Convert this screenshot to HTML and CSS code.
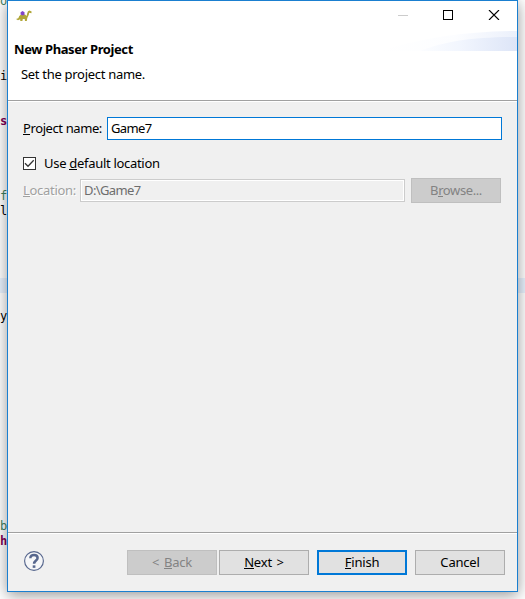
FILE: index.html
```html
<!DOCTYPE html>
<html lang="en">
<head>
<meta charset="utf-8">
<title>New Phaser Project</title>
<link rel="stylesheet" href="styles.css">
</head>
<body>
<div class="editor" aria-hidden="true">
  <div class="current-line"></div>
  <span class="code comment l1">o</span>
  <span class="code l2">i</span>
  <span class="code keyword l3">s</span>
  <span class="code comment l4">f</span>
  <span class="code l5">l</span>
  <span class="code l6">y</span>
  <span class="code comment l7">b</span>
  <span class="code keyword l8">h</span>
</div>
<main class="dialog">
  <header class="banner">
    <div class="titlebar">
      <svg class="app-icon" width="16" height="12" viewBox="0 0 16 12">
        <path d="M0 9 2.3 8.3 3.3 6 5 4.6 9 4.6 10.6 6 11.2 3.2 12 1.3 13.5.4 15.6 1.4 15.4 3.3 13.2 2.7 12.8 4.8 11.3 8 10.8 11 9 11 8.7 9 6.8 9 6.4 11 4.3 11 4.2 9.3 2 10.3Z" fill="#b0a638"/>
        <path d="M4.6 2.3 6.5 1.1 8.5 2.3 8.5 4.8 6.5 5.6 4.6 4.5Z" fill="#8245c8"/>
      </svg>
      <svg class="controls" width="102" height="10" viewBox="0 0 102 10" shape-rendering="crispEdges">
        <path d="M0 5.5H10" stroke="#ccc"/>
        <path d="M45.5.5H54.5V9.5H45.5Z" fill="none" stroke="#000"/>
        <path d="M91 0 101 10M101 0 91 10" stroke="#000" stroke-width="1.15" shape-rendering="auto"/>
      </svg>
    </div>
    <svg class="swoosh" width="137" height="20" viewBox="0 0 137 20">
      <defs>
        <linearGradient id="outer"><stop offset="0" stop-color="#fff"/><stop offset=".55" stop-color="#fcfdff"/><stop offset="1" stop-color="#ebf0fb"/></linearGradient>
        <linearGradient id="inner"><stop offset="0" stop-color="#fcfdff"/><stop offset=".4" stop-color="#f2f6fe"/><stop offset="1" stop-color="#dde5f7"/></linearGradient>
      </defs>
      <path d="M0 20C40 7 90 0 137 0V20Z" fill="url(#outer)"/>
      <path d="M40 20C65 10 95 6 137 6V20Z" fill="url(#inner)"/>
    </svg>
    <h1>New Phaser Project</h1>
    <p>Set the project name.</p>
  </header>
  <section class="content">
    <div class="row name-row">
      <label class="name-label"><u>P</u>roject name:</label>
      <div class="field">Game7</div>
    </div>
    <div class="row check-row">
      <span class="checkbox"><svg width="11" height="11" viewBox="0 0 11 11"><path d="M1 5.3 4 8.3 9.7 2.2" fill="none" stroke="#333" stroke-width="1.25"/></svg></span>
      <label class="check-label">Use <u>d</u>efault location</label>
    </div>
    <div class="row location-row">
      <label class="location-label"><u>L</u>ocation:</label>
      <div class="field disabled-field">D:\Game7</div>
      <div class="button disabled browse"><span>B<u>r</u>owse...</span></div>
    </div>
  </section>
  <footer class="footer">
    <svg class="help" width="20" height="20" viewBox="0 0 20 20" fill="none" stroke="#56668d">
      <circle cx="10" cy="10" r="9.4" fill="#f5f6f8" stroke-width="1.15"/>
      <path d="M6.4 7.2C6.3 4.9 7.8 4 10 4S13.6 5 13.6 6.9C13.6 9.6 10.1 9.4 10.1 12.8" stroke-width="2.5"/>
      <path d="M8.7 15.6H11.4" stroke-width="2.5"/>
    </svg>
    <div class="button disabled"><span>&lt; <u>B</u>ack</span></div>
    <div class="button next"><span><u>N</u>ext &gt;</span></div>
    <div class="button primary"><span><u>F</u>inish</span></div>
    <div class="button cancel"><span>Cancel</span></div>
  </footer>
</main>
</body>
</html>
```

FILE: styles.css
```css
* { box-sizing: border-box; }
html, body { margin: 0; width: 525px; height: 599px; overflow: hidden; }
body {
  position: relative;
  background: #fff;
  color: #000;
  font: 13px/17px "Noto Sans", "Open Sans", sans-serif;
}
.editor { position: absolute; inset: 0; overflow: hidden; }
.current-line { position: absolute; top: 278px; width: 100%; height: 15px; background: #e8f2fe; }
.code { position: absolute; left: 0; font: 12px/15px "DejaVu Sans Mono", monospace; }
.comment { color: #3f7f5f; }
.keyword { color: #7f0055; font-weight: bold; }
.l1 { top: -6px; }
.l2 { top: 69px; }
.l3 { top: 114px; }
.l4 { top: 189px; }
.l5 { top: 204px; }
.l6 { top: 309px; }
.l7 { top: 519px; }
.l8 { top: 534px; }
.dialog {
  position: relative;
  display: flex;
  flex-direction: column;
  width: 511px;
  height: 592px;
  margin-left: 7px;
  border: 1px solid #1a7fd0;
  background: #f0f0f0;
  box-shadow: 0 3px 14px rgba(0, 0, 0, .42);
}
.banner { position: relative; height: 100px; background: #fff; border-bottom: 1px solid #a0a0a0; }
.titlebar { display: flex; justify-content: space-between; height: 30px; padding: 9px 17px 0 8px; }
.swoosh { position: absolute; right: 0; top: 30px; }
h1 { margin: 10px 0 0 6px; font-size: 13px; line-height: 17px; letter-spacing: -.4px; }
p { margin: 8px 0 0 13px; letter-spacing: -.3px; }
.content { flex: 1; border-top: 1px solid #fff; padding: 15px 15px 0; }
.row { display: flex; align-items: center; }
.name-label { width: 84px; letter-spacing: -.4px; }
.field { flex: 1; height: 23px; padding: 2px 3px; border: 1px solid #0078d7; background: #fff; letter-spacing: -.6px; }
.check-row { height: 13px; margin-top: 17px; }
.check-label { letter-spacing: -.3px; }
.checkbox { display: flex; width: 13px; height: 13px; margin-right: 8px; border: 1px solid #333; background: #fff; }
.location-row { height: 25px; margin-top: 8px; }
.location-label { width: 57px; color: #a0a0a0; text-shadow: 1px 1px #fff; letter-spacing: -.3px; }
.disabled-field { flex: 0 0 325px; margin-right: 6px; color: #6d6d6d; border-color: #ccc; background: #f0f0f0; box-shadow: inset 0 0 0 1px #fff; }
.button {
  display: flex;
  align-items: center;
  justify-content: center;
  width: 90px;
  height: 25px;
  border: 1px solid #adadad;
  background: #e1e1e1;
}
.disabled { border-color: #bfbfbf; background: #ccc; color: #838383; }
.browse { letter-spacing: -.4px; }
.footer { display: flex; height: 59px; padding: 17px 12px 0 16px; border-top: 1px solid #a0a0a0; box-shadow: inset 0 1px #fff; }
.footer .button { letter-spacing: -.2px; word-spacing: 1.5px; }
.help { margin: 1px 83px 0 0; }
.next { margin-left: 2px; }
.primary { margin-left: 8px; border: 2px solid #0078d7; }
.cancel { margin-left: 8px; }
u { text-decoration: none; background: linear-gradient(currentColor, currentColor) 0 calc(100% - 2px) / 100% 1px no-repeat; }
```
